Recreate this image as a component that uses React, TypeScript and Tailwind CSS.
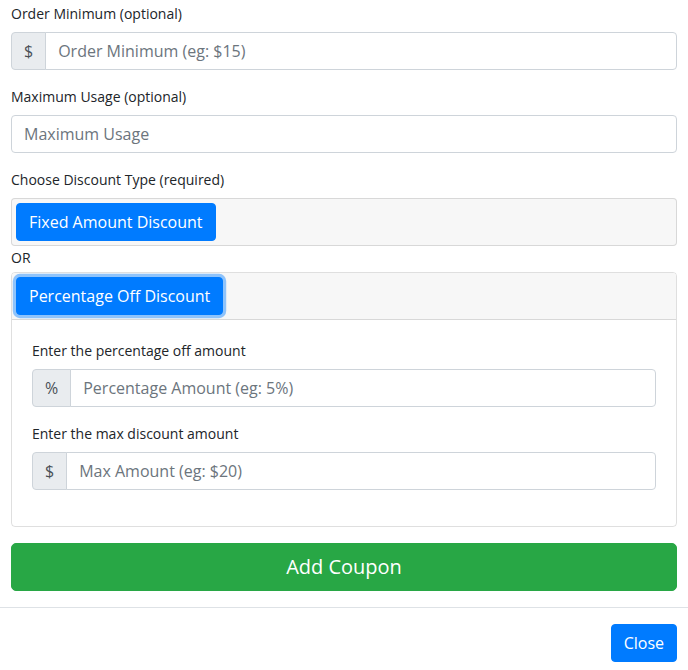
import React from "react";

function Field({
  label,
  placeholder,
  addon,
}: {
  label: string;
  placeholder: string;
  addon?: string;
}) {
  return (
    <div className="mb-4">
      <label className="block text-[14px] leading-[21px] mb-2 text-[#212529]">{label}</label>
      <div className="flex">
        {addon && (
          <span className="flex items-center px-3 h-[38px] text-[16px] text-[#495057] bg-[#e9ecef] border border-[#ced4da] rounded-l-[4px]">
            {addon}
          </span>
        )}
        <input
          type="text"
          placeholder={placeholder}
          className={`flex-1 min-w-0 h-[38px] px-3 text-[16px] text-[#495057] placeholder:text-[#6c757d] bg-white border border-[#ced4da] focus:outline-none ${
            addon ? "-ml-px rounded-r-[4px]" : "rounded-[4px]"
          }`}
        />
      </div>
    </div>
  );
}

export default function App() {
  return (
    <div className="w-[688px] h-[670px] bg-white font-['Open_Sans',sans-serif] text-[#212529] overflow-hidden">
      {/* Modal body */}
      <div className="px-[11px] pt-[3px] pb-4">
        <Field label="Order Minimum (optional)" addon="$" placeholder="Order Minimum (eg: $15)" />
        <Field label="Maximum Usage (optional)" placeholder="Maximum Usage" />

        <label className="block text-[14px] leading-[21px] mb-2">Choose Discount Type (required)</label>

        <div className="border border-black/[0.125] rounded-[4px] bg-[#f7f7f7] p-1">
          <button className="h-[38px] px-3 text-[16px] text-white bg-[#007bff] border border-[#007bff] rounded-[4px]">
            Fixed Amount Discount
          </button>
        </div>

        <div className="text-[14px] leading-[21px] mt-px mb-1">OR</div>

        <div className="border border-black/[0.125] rounded-[4px] overflow-hidden">
          <div className="bg-[#f7f7f7] p-1 border-b border-black/[0.125]">
            <button className="h-[38px] px-3 text-[16px] text-white bg-[#007bff] border border-[#007bff] rounded-[4px] shadow-[0_0_0_0.2rem_rgba(38,143,255,0.5)]">
              Percentage Off Discount
            </button>
          </div>
          <div className="px-5 pt-5 pb-5">
            <Field label="Enter the percentage off amount" addon="%" placeholder="Percentage Amount (eg: 5%)" />
            <Field label="Enter the max discount amount" addon="$" placeholder="Max Amount (eg: $20)" />
          </div>
        </div>

        <button className="mt-4 w-full h-[48px] text-[20px] text-white bg-[#28a745] border border-[#28a745] rounded-[5px]">
          Add Coupon
        </button>
      </div>

      {/* Modal footer */}
      <div className="border-t border-[#dee2e6] px-[11px] py-4 flex justify-end">
        <button className="h-[38px] px-3 text-[16px] text-white bg-[#007bff] border border-[#007bff] rounded-[4px]">
          Close
        </button>
      </div>
    </div>
  );
}
